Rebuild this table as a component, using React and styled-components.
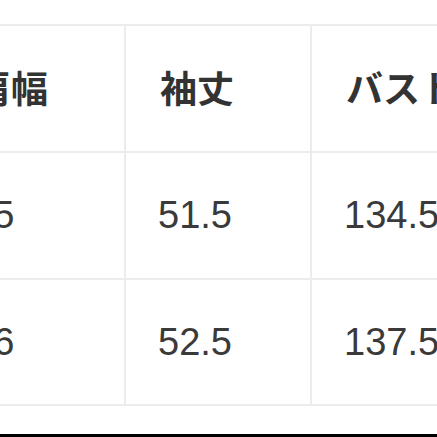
import styled, { createGlobalStyle } from 'styled-components'

const GlobalStyle = createGlobalStyle`
  html, body {
    margin: 0;
    padding: 0;
    background: #ffffff;
  }
`

const Page = styled.div`
  width: 437px;
  height: 437px;
  overflow: hidden;
  display: flex;
  flex-direction: column;
  background: #ffffff;
`

const TableWrap = styled.div`
  padding-top: 24px;
  margin-left: -62px;
`

const SizeTable = styled.table`
  border-collapse: collapse;
  table-layout: fixed;
  width: 560px;
  color: #333333;
`

const HeadCell = styled.th`
  width: 186px;
  height: 127px;
  padding: 0 0 4px 34px;
  box-sizing: border-box;
  border: 2px solid #ececec;
  text-align: left;
  font-family: 'Noto Sans CJK JP', 'Noto Sans', sans-serif;
  font-weight: 700;
  font-size: 37px;
  white-space: nowrap;
  overflow: hidden;
`

const Cell = styled.td`
  height: ${(p) => p.$h}px;
  padding: 0 0 0 32px;
  box-sizing: border-box;
  border: 2px solid #ececec;
  font-family: 'Liberation Sans', Arial, sans-serif;
  font-size: 38px;
  font-weight: 400;
  color: #3a3a3a;
  white-space: nowrap;
  overflow: hidden;
`

const BottomBar = styled.div`
  margin-top: auto;
  height: 3px;
  background: #000000;
`

const headers = ['肩幅', '袖丈', 'バスト']
const rows = [
  { h: 127, values: ['55', '51.5', '134.5'] },
  { h: 126, values: ['56', '52.5', '137.5'] },
]

const App = () => {
  return (
    <Page>
      <GlobalStyle />
      <TableWrap>
        <SizeTable>
          <thead>
            <tr>
              {headers.map((h) => (
                <HeadCell key={h}>{h}</HeadCell>
              ))}
            </tr>
          </thead>
          <tbody>
            {rows.map((row, i) => (
              <tr key={i}>
                {row.values.map((v, j) => (
                  <Cell key={j} $h={row.h}>
                    {v}
                  </Cell>
                ))}
              </tr>
            ))}
          </tbody>
        </SizeTable>
      </TableWrap>
      <BottomBar />
    </Page>
  )
}

export default App
